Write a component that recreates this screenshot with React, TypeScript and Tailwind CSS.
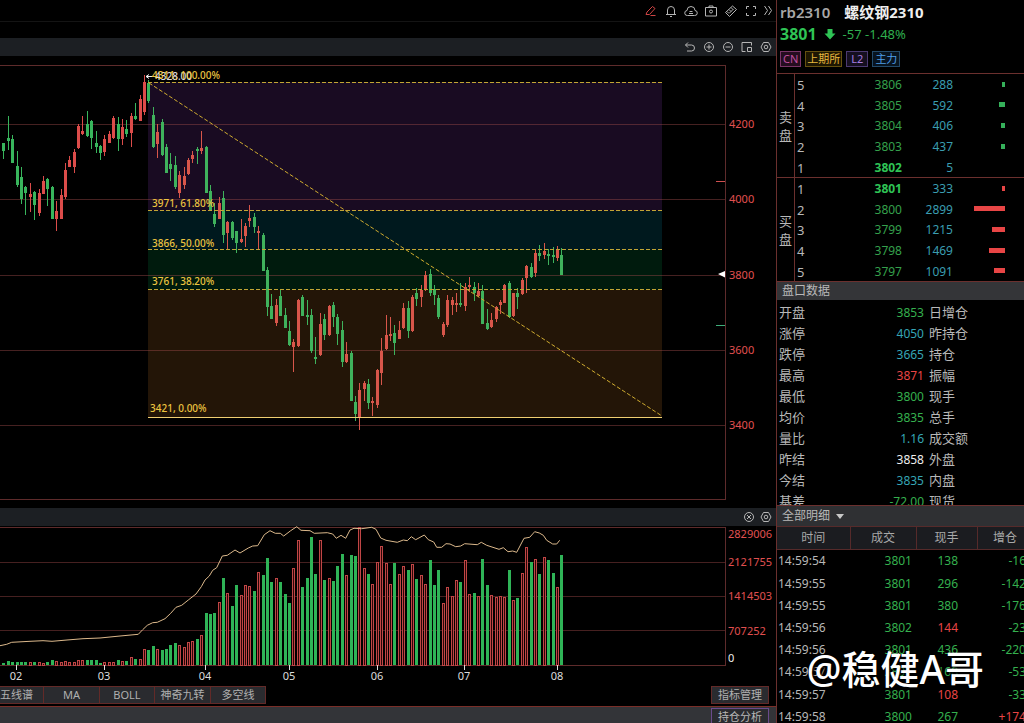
import type { ReactNode } from 'react';

type Dir = 'u' | 'd';
// direction, high, low, body top, body bottom
type Candle = [Dir, number, number, number, number];

const STEP = 4.394;
const START = 3.4;
const VOLUME_BASE = 665;

const candles: Candle[] = [
  ['d', 143, 159, 143, 151], ['d', 116, 150, 138, 141], ['d', 135, 163, 139, 163], ['d', 151, 187, 166, 185],
  ['d', 167, 204, 177, 199], ['d', 186, 215, 187, 193], ['u', 183, 212, 194, 197], ['d', 191, 220, 192, 205],
  ['u', 189, 216, 193, 213], ['u', 176, 194, 181, 194], ['d', 178, 206, 179, 189], ['d', 186, 219, 187, 219],
  ['u', 201, 231, 211, 219], ['u', 189, 219, 195, 219], ['u', 163, 199, 170, 197], ['u', 156, 167, 160, 167],
  ['u', 149, 173, 152, 167], ['u', 124, 149, 126, 148], ['u', 116, 135, 131, 134], ['d', 111, 137, 124, 136],
  ['d', 120, 149, 121, 138], ['d', 131, 153, 143, 147], ['d', 145, 160, 146, 153], ['u', 135, 156, 139, 152],
  ['u', 131, 143, 134, 143], ['u', 116, 139, 118, 138], ['d', 117, 151, 124, 139], ['u', 119, 145, 127, 139],
  ['d', 120, 137, 129, 134], ['u', 113, 147, 116, 133], ['d', 103, 120, 116, 119], ['u', 95, 121, 99, 121],
  ['u', 75, 115, 82, 112], ['d', 80, 103, 83, 101], ['d', 107, 148, 115, 147], ['u', 124, 158, 132, 144],
  ['d', 119, 156, 122, 155], ['d', 144, 173, 147, 173], ['d', 153, 181, 164, 169], ['d', 156, 189, 165, 187],
  ['u', 171, 198, 175, 193], ['u', 167, 189, 176, 185], ['u', 158, 175, 160, 174], ['u', 151, 163, 155, 159],
  ['d', 147, 164, 149, 151], ['u', 131, 154, 148, 151], ['d', 146, 193, 147, 193], ['d', 185, 211, 191, 210],
  ['d', 203, 227, 214, 224], ['u', 197, 219, 203, 219], ['d', 191, 243, 198, 235], ['u', 221, 249, 222, 233],
  ['d', 221, 240, 222, 238], ['d', 231, 253, 231, 243], ['u', 219, 243, 239, 242], ['u', 223, 247, 226, 236],
  ['u', 205, 227, 218, 221], ['d', 213, 233, 217, 227], ['u', 226, 249, 231, 233], ['d', 233, 271, 235, 271],
  ['d', 267, 316, 270, 307], ['d', 294, 319, 306, 319], ['u', 299, 326, 305, 323], ['d', 290, 316, 296, 316],
  ['d', 308, 328, 315, 328], ['d', 321, 346, 331, 345], ['u', 339, 372, 342, 347], ['u', 299, 347, 300, 346],
  ['d', 295, 316, 297, 316], ['d', 300, 325, 315, 317], ['d', 309, 353, 315, 351], ['d', 337, 364, 357, 358],
  ['u', 313, 356, 324, 355], ['d', 314, 340, 319, 335], ['u', 305, 336, 306, 335], ['d', 302, 327, 305, 317],
  ['d', 314, 345, 317, 334], ['d', 321, 367, 330, 362], ['u', 342, 363, 354, 362], ['d', 351, 401, 353, 401],
  ['d', 396, 421, 402, 414], ['u', 383, 430, 390, 417], ['u', 381, 401, 383, 389], ['d', 379, 409, 384, 403],
  ['u', 397, 416, 401, 403], ['u', 369, 408, 370, 405], ['u', 338, 385, 351, 373], ['u', 315, 350, 335, 349],
  ['u', 317, 341, 334, 335], ['d', 325, 355, 333, 343], ['u', 321, 339, 330, 339], ['u', 303, 329, 308, 328],
  ['d', 301, 338, 308, 331], ['u', 295, 332, 297, 331], ['d', 288, 306, 293, 299], ['u', 285, 307, 290, 297],
  ['u', 271, 291, 275, 290], ['d', 269, 296, 274, 293], ['d', 285, 305, 289, 295], ['d', 295, 319, 298, 317],
  ['u', 322, 337, 324, 335], ['u', 295, 327, 300, 325], ['u', 297, 315, 300, 305], ['u', 293, 312, 303, 305],
  ['d', 283, 307, 303, 305], ['u', 283, 311, 287, 306], ['u', 277, 292, 285, 287], ['d', 282, 301, 287, 293],
  ['u', 283, 297, 291, 296], ['d', 285, 324, 291, 324], ['d', 309, 330, 323, 329], ['u', 313, 328, 320, 327],
  ['u', 306, 322, 307, 319], ['u', 300, 314, 302, 305], ['u', 284, 303, 285, 303], ['d', 281, 318, 283, 317],
  ['u', 293, 317, 293, 316], ['d', 288, 309, 293, 297], ['u', 278, 295, 280, 294], ['u', 265, 293, 266, 278],
  ['d', 263, 278, 267, 277], ['u', 249, 277, 253, 273], ['d', 245, 261, 253, 256], ['u', 243, 259, 251, 255],
  ['d', 249, 265, 254, 256], ['d', 247, 263, 255, 257], ['u', 246, 261, 249, 258], ['d', 248, 275, 255, 275],
];

// bar heights, one for each candle
const volumes = [
  2, 4, 3, 3, 3, 3, 3, 3, 3, 2, 3, 5, 4, 3, 4, 3, 3, 5, 5, 5, 5, 5, 2, 3, 3, 3, 5, 4, 4, 8, 6, 6,
  16, 15, 19, 16, 15, 16, 20, 22, 20, 18, 23, 24, 26, 30, 52, 51, 52, 63, 87, 72, 59, 80, 70, 80, 79, 74, 93, 90, 107, 83, 87, 83,
  71, 62, 97, 125, 78, 87, 128, 91, 125, 85, 87, 84, 99, 111, 90, 110, 109, 138, 97, 91, 81, 103, 119, 102, 81, 102, 91, 99, 95, 101, 86, 90,
  81, 105, 80, 95, 62, 78, 69, 85, 83, 105, 71, 72, 69, 106, 80, 70, 68, 69, 68, 95, 65, 67, 92, 118, 103, 106, 91, 108, 105, 92, 78, 110,
];

const openInterest =
  '0,645.7 6.7,644.3 11.7,642.3 30,641.3 43,640.7 52,641.3 67,640 83,638.7 100,638 117,636.3 138.3,634.3 142.7,629.7 147.3,625.3 152.7,622.7 157.3,622.3 165,618.7 170.7,613.3 176,607.3 181.7,605.3 188.3,600 196,594 201.3,586.7 205,580 209.3,576 212.7,570.3 216.7,567.7 222.3,556 227.3,555.3 235,550 240,553 248.3,548 252.7,546 257.7,545.7 264.3,534.7 270,530.7 275.3,533.3 280.3,533.3 283.7,536 290.7,530.7 296.7,526.7 301,530.3 310,530.7 314.3,533.3 327.3,532.7 332.7,534 336.3,538.3 341,535.3 345.7,538.3 350,530 354,528.3 361.7,528.7 371.7,527.3 376,529.3 380.7,538 386,540.3 397.3,542.3 403.3,540 407.3,540.7 411.3,536.7 415.7,539.7 424.3,535 428.3,539.7 433.7,542 436.7,547.3 441.7,547.3 446,543.7 450,544 455.7,546.7 460.7,546 464.7,543.7 477.3,544.7 481.3,542.3 486.7,545.3 499,549.3 503.3,547.7 508,551.7 512.7,551 516.7,552.3 524,538.3 529.7,537.3 534.7,531.7 539.3,533 543.3,535.3 546.7,540.3 552.7,544 556.7,544 559.7,540.3';

const fibZones = [
  { y: 82, h: 129, fill: '#190b22' },
  { y: 211, h: 39, fill: '#00191e' },
  { y: 250, h: 40, fill: '#001b0d' },
  { y: 290, h: 127, fill: '#231507' },
];

const fibLabels = [
  { y: 79, text: '4311, 100.00%' },
  { y: 207, text: '3971, 61.80%' },
  { y: 247, text: '3866, 50.00%' },
  { y: 285, text: '3761, 38.20%' },
  { y: 412, text: '3421, 0.00%' },
];

const priceAxis = [
  { y: 124, label: '4200' },
  { y: 199, label: '4000' },
  { y: 275, label: '3800' },
  { y: 350, label: '3600' },
  { y: 425, label: '3400' },
];

const volumeAxis = [
  { y: 538, label: '2829006' },
  { y: 566, label: '2121755' },
  { y: 600, label: '1414503' },
  { y: 635, label: '707252' },
];

const months = [
  { x: 16, label: '02' },
  { x: 104, label: '03' },
  { x: 205, label: '04' },
  { x: 289, label: '05' },
  { x: 377, label: '06' },
  { x: 464, label: '07' },
  { x: 557, label: '08' },
];

const asks = [
  { level: 5, price: 3806, qty: 288, bar: 3 },
  { level: 4, price: 3805, qty: 592, bar: 6 },
  { level: 3, price: 3804, qty: 406, bar: 4 },
  { level: 2, price: 3803, qty: 437, bar: 4 },
  { level: 1, price: 3802, qty: 5, bar: 0 },
];

const bids = [
  { level: 1, price: 3801, qty: 333, bar: 3 },
  { level: 2, price: 3800, qty: 2899, bar: 31 },
  { level: 3, price: 3799, qty: 1215, bar: 13 },
  { level: 4, price: 3798, qty: 1469, bar: 16 },
  { level: 5, price: 3797, qty: 1091, bar: 11 },
];

const quoteRows = [
  { name: '开盘', value: '3853', color: 'text-[#35b04e]', other: '日增仓' },
  { name: '涨停', value: '4050', color: 'text-[#35a5b5]', other: '昨持仓' },
  { name: '跌停', value: '3665', color: 'text-[#35a5b5]', other: '持仓' },
  { name: '最高', value: '3871', color: 'text-[#e84545]', other: '振幅' },
  { name: '最低', value: '3800', color: 'text-[#35b04e]', other: '现手' },
  { name: '均价', value: '3835', color: 'text-[#35b04e]', other: '总手' },
  { name: '量比', value: '1.16', color: 'text-[#35a5b5]', other: '成交额' },
  { name: '昨结', value: '3858', color: 'text-[#eeeeee]', other: '外盘' },
  { name: '今结', value: '3835', color: 'text-[#35a5b5]', other: '内盘' },
  { name: '基差', value: '-72.00', color: 'text-[#35b04e]', other: '现货' },
];

const trades = [
  { time: '14:59:54', price: 3801, qty: 138, delta: '-16', up: false },
  { time: '14:59:55', price: 3801, qty: 296, delta: '-142', up: false },
  { time: '14:59:55', price: 3801, qty: 380, delta: '-176', up: false },
  { time: '14:59:56', price: 3802, qty: 144, delta: '-23', up: true },
  { time: '14:59:56', price: 3801, qty: 436, delta: '-220', up: false },
  { time: '14:59:57', price: 3801, qty: 168, delta: '-53', up: false },
  { time: '14:59:57', price: 3801, qty: 108, delta: '-33', up: true },
  { time: '14:59:58', price: 3800, qty: 267, delta: '+174', up: false },
];

function IconButton({ label, className = 'w-3.5 text-[#b5b5b5]', box = '0 0 14 14', children }: { label: string; className?: string; box?: string; children: ReactNode }) {
  return (
    <button type="button" aria-label={label} className={`h-3.5 ${className}`}>
      <svg viewBox={box} className="block h-full w-full" fill="none" stroke="currentColor" strokeWidth="1">
        {children}
      </svg>
    </button>
  );
}

function SettingsButton() {
  return (
    <IconButton label="设置">
      <path d="M4.500 2.500h5l2.500 4.500-2.500 4.500h-5L2 7z" />
      <circle cx="7" cy="7" r="1.800" />
    </IconButton>
  );
}

function PriceChart() {
  return (
    <svg viewBox="0 56 776 452" className="block h-auto w-full" role="img" aria-label="螺纹钢2310 K线">
      <g shapeRendering="crispEdges">
        {fibZones.map((z) => (
          <rect key={z.y} x="148" y={z.y} width="514" height={z.h} fill={z.fill} />
        ))}
        {priceAxis.map((a) => (
          <rect key={a.y} x="0" y={a.y} width="725" height="1" fill="#9b4a4a" fillOpacity="0.45" />
        ))}
        <path d="M0 65.500H725.500V499.500H0" fill="none" stroke="#5e2b2b" />
        {candles.map(([dir, high, low, top, bottom], i) => {
          const x = Math.round(START + i * STEP);
          const fill = dir === 'u' ? (i > 33 ? '#d8564a' : '#dc4c4a') : i > 33 ? '#3fb25c' : '#38b55c';
          return (
            <g key={i} fill={fill}>
              <rect x={x} y={high} width="1" height={low - high} />
              <rect x={x - 1} y={top} width="3" height={Math.max(bottom - top, 2)} />
            </g>
          );
        })}
        {[82, 210, 249, 289].map((y) => (
          <path key={y} d={`M148 ${y + 0.5}H662`} stroke="#c2a535" strokeDasharray="4 2" />
        ))}
        <rect x="148" y="417" width="514" height="1" fill="#f0cf72" />
        <rect x="716" y="181" width="9" height="1" fill="#d05050" />
        <rect x="716" y="325" width="9" height="1" fill="#3fae7a" />
      </g>
      <path d="M149 83L662 416" stroke="#d0ac30" strokeDasharray="4 2" />
      <path d="M718 274L725 271V277.500Z" fill="#ffffff" />
      <path d="M146 76.500H156M149 74.500L146 76.500L149 78.500" stroke="#eeeeee" fill="none" />
      <g fontSize="10" fontWeight="500">
        <text x="155" y="80" fill="#dddddd">4328.00</text>
        {fibLabels.map((l) => (
          <text key={l.y} x={l.y === 412 ? 150 : 152} y={l.y} fill="#ecc440">
            {l.text}
          </text>
        ))}
      </g>
      <g fontSize="11" fill="#e05050">
        {priceAxis.map((a) => (
          <text key={a.y} x="729" y={a.y + 4}>
            {a.label}
          </text>
        ))}
      </g>
    </svg>
  );
}

function VolumeChart() {
  return (
    <svg viewBox="0 526 776 160" className="block h-auto w-full" role="img" aria-label="成交量">
      <g shapeRendering="crispEdges">
        {[562, 596, 630].map((y) => (
          <rect key={y} x="0" y={y} width="725" height="1" fill="#462020" />
        ))}
        <path d="M0 527.500H725.500V665.500H0" fill="none" stroke="#5e2b2b" />
        {volumes.map((h, i) => {
          const x = Math.round(START + i * STEP) - 1;
          return candles[i][0] === 'd' ? (
            <rect key={i} x={x} y={VOLUME_BASE - h} width="3" height={h} fill="#2fb457" />
          ) : (
            <rect key={i} x={x + 0.5} y={VOLUME_BASE - h + 0.5} width="2" height={h - 0.5} fill="#2c0606" stroke="#c04646" />
          );
        })}
        {months.map((m) => (
          <rect key={m.label} x={m.x} y="665" width="1" height="5" fill="#dddddd" />
        ))}
      </g>
      <polyline points={openInterest} fill="none" stroke="#dcb98c" />
      <g fontSize="11">
        {volumeAxis.map((a) => (
          <text key={a.y} x="728" y={a.y} fill="#e05050">
            {a.label}
          </text>
        ))}
        <text x="728" y="662" fill="#eeeeee">0</text>
        {months.map((m) => (
          <text key={m.label} x={m.x} y="680" textAnchor="middle" fill="#dddddd">
            {m.label}
          </text>
        ))}
      </g>
    </svg>
  );
}

function OrderBook({ side, rows, best, barColor }: { side: [string, string]; rows: typeof asks; best: number; barColor: string }) {
  return (
    <div className="flex border-t border-[#6b302e]">
      <div className="flex w-[18px] flex-col items-center justify-center gap-1 border-r border-[#6b302e] text-[13px] leading-[14px] text-[#b8b8b8]">
        <span>{side[0]}</span>
        <span>{side[1]}</span>
      </div>
      <table className="h-[103px] flex-1 table-fixed text-xs leading-4">
        <tbody>
          {rows.map((r) => (
            <tr key={r.level}>
              <td className="w-7 pt-0.5 pl-0.5 text-[13px] text-[#b8b8b8]">{r.level}</td>
              <td className={`w-[79px] pt-0.5 text-right ${r.price === best ? 'font-bold text-[#2fc455]' : 'text-[#35a04c]'}`}>{r.price}</td>
              <td className="w-[51px] pt-0.5 text-right text-[#3a9db0]">{r.qty}</td>
              <td className="pr-[19px]">
                <div className={`ml-auto h-[5px] ${barColor}`} style={{ width: r.bar }} />
              </td>
            </tr>
          ))}
        </tbody>
      </table>
    </div>
  );
}

function QuotePanel() {
  return (
    <aside className="flex w-[248px] shrink-0 flex-col overflow-hidden border-l border-[#6b302e]">
      <header className="h-[73px] shrink-0 px-[3px]">
        <h1 className="flex gap-3.5 text-[15px] leading-6 font-bold">
          <span className="font-semibold text-[#a8a8a8]">rb2310</span>
          <span className="text-[#eeeeee]">螺纹钢2310</span>
        </h1>
        <div className="flex items-center text-[#2fb04e]">
          <span className="text-base leading-5 font-bold text-[#2fc455]">3801</span>
          <svg viewBox="0 0 12 12" className="mx-[7px] h-3 w-3" fill="#2fc455">
            <path d="M3.500 1H8.500V5.500H11.500L6 11.500L0.500 5.500H3.500Z" />
          </svg>
          <span className="text-[13px] leading-5">-57 -1.48%</span>
        </div>
        <div className="mt-[7px] flex gap-1 text-[11px] leading-[14px]">
          <span className="border border-[#7a3568] bg-[#260d20] px-0.5 text-[#c250a0]">CN</span>
          <span className="border border-[#66510f] bg-[#1e1702] px-px text-[#e8b93f]">上期所</span>
          <span className="border border-[#4c3a73] bg-[#150f20] px-1 text-[#a57ee0]">L2</span>
          <span className="border border-[#234a6a] bg-[#081420] px-0.5 text-[#4f9fe8]">主力</span>
        </div>
      </header>

      <OrderBook side={['卖', '盘']} rows={asks} best={3802} barColor="bg-[#35b05a]" />
      <OrderBook side={['买', '盘']} rows={bids} best={3801} barColor="bg-[#e84545]" />

      <h2 className="border-t border-[#6b302e] bg-[#343538] pl-[5px] text-xs leading-[18px] text-[#b8b8b8]">盘口数据</h2>
      <div className="h-[205px] shrink-0 overflow-hidden pt-0.5">
        <table className="w-full table-fixed text-xs leading-[21px]">
          <tbody>
            {quoteRows.map((r) => (
              <tr key={r.name} className="h-[21px]">
                <th className="w-[60px] pl-0.5 text-left text-[13px] font-normal text-[#b8b8b8]">{r.name}</th>
                <td className={`w-[87px] text-right ${r.color}`}>{r.value}</td>
                <th className="pl-[5px] text-left text-[13px] font-normal text-[#b8b8b8]">{r.other}</th>
              </tr>
            ))}
          </tbody>
        </table>
      </div>

      <button type="button" className="flex shrink-0 items-center gap-1.5 border-t border-[#6b302e] bg-[#2f3033] pl-[5px] text-xs leading-5 text-[#b8b8b8]">
        全部明细
        <svg viewBox="0 0 8 5" className="h-[5px] w-2" fill="#c8c8c8">
          <path d="M0 0H8L4 5Z" />
        </svg>
      </button>
      <table className="h-[202px] w-64 shrink-0 table-fixed border-collapse text-xs leading-4">
        <thead>
          <tr className="h-[23px] bg-[#1b1c20] text-[#a8a8a8]">
            <th className="w-[73px] border-y border-r border-[#562a2a] font-normal">时间</th>
            <th className="w-[66px] border border-[#562a2a] font-normal">成交</th>
            <th className="w-[61px] border border-[#562a2a] font-normal">现手</th>
            <th className="w-14 border border-[#562a2a] font-normal">增仓</th>
          </tr>
        </thead>
        <tbody className="text-[#35b04e]">
          {trades.map((t, i) => (
            <tr key={i}>
              <td className="pl-px text-[#b8b8b8]">{t.time}</td>
              <td className="pr-1 text-right">{t.price}</td>
              <td className={`pr-[19px] text-right ${t.up ? 'text-[#e84545]' : ''}`}>{t.qty}</td>
              <td className={`pr-[7px] text-right ${t.delta.startsWith('+') ? 'text-[#e84545]' : ''}`}>{t.delta}</td>
            </tr>
          ))}
        </tbody>
      </table>
    </aside>
  );
}

export default function App() {
  return (
    <div className="relative flex h-screen overflow-hidden bg-black font-['Noto_Sans','Noto_Sans_CJK_SC',sans-serif]">
      <main className="flex min-w-0 flex-1 flex-col">
        <div className="flex h-[22px] shrink-0 items-center justify-end gap-1.5 border-b border-[#141414] pr-1">
          <IconButton label="画线" className="w-3.5 text-[#d04545]">
            <path d="M2 10.500L3 8L8.500 2.500L11 4.500L5.500 10.500ZM6.500 11.500H11.500" />
          </IconButton>
          <IconButton label="预警">
            <path d="M3.500 10.500V6a3.500 3.500 0 0 1 7 0V10.500M2 10.500H12M6 12.500H8" />
          </IconButton>
          <IconButton label="云端">
            <path d="M3.500 11.500a2.500 2.500 0 0 1-.5-5a4 4 0 0 1 8 0a2.500 2.500 0 0 1-.5 5ZM5.500 7.500H8.500M5 9.500H9" />
          </IconButton>
          <IconButton label="截图">
            <path d="M1.500 3.500H12.500V12H1.500ZM5 3.500V2H9V3.500" />
            <circle cx="7" cy="7.500" r="1.500" />
          </IconButton>
          <IconButton label="测量">
            <path d="M1.500 8.500L8.500 2L12.500 5.500L5.500 12.500ZM5 5.500L7 7.500M7 3.500L9 5.500M3 7.500L4.500 9M5 9.500L9.500 5" />
          </IconButton>
          <IconButton label="全屏">
            <path d="M2.500 5V2.500H5M9 2.500H11.500V5M11.500 9V11.500H9M5 11.500H2.500V9" />
          </IconButton>
          <IconButton label="更多" className="w-2 text-[#b5b5b5]" box="0 0 8 14">
            <path d="M0.500 2L3.500 6.500L0.500 11M4.500 2L7.500 6.500L4.500 11" />
          </IconButton>
        </div>
        <div className="mt-4 flex h-[18px] shrink-0 items-center justify-end gap-[5px] bg-[#1c1f23] pr-[3px]">
          <IconButton label="撤销">
            <path d="M5 2.500L2.500 5L5 7.500M2.500 5H8.500a3 3 0 0 1 0 6H4" />
          </IconButton>
          <IconButton label="放大">
            <circle cx="7" cy="7" r="4.500" />
            <path d="M4.500 7H9.500M7 4.500V9.500" />
          </IconButton>
          <IconButton label="缩小">
            <circle cx="7" cy="7" r="4.500" />
            <path d="M4.500 7H9.500" />
          </IconButton>
          <IconButton label="窗口">
            <path d="M11.500 5.500V2.500H2V11.500H5.500M7.500 7.500H11.500V11.500H7.500Z" />
          </IconButton>
          <SettingsButton />
        </div>
        <PriceChart />
        <div className="flex h-[18px] shrink-0 items-center justify-end gap-[3px] bg-[#1c1f23] pr-[3px]">
          <IconButton label="关闭">
            <circle cx="7" cy="7" r="4.500" />
            <path d="M5 5L9 9M9 5L5 9" />
          </IconButton>
          <SettingsButton />
        </div>
        <VolumeChart />

        <div className="mb-0.5 flex h-[18px] shrink-0 justify-between pr-[7px] text-[11px] leading-4 text-[#b0b0b0]">
          <nav className="flex">
            <button type="button" className="w-11 border border-l-0 border-[#632a28] bg-[#2a2b2f] pr-3 whitespace-nowrap">五线谱</button>
            <button type="button" className="w-14 border border-l-0 border-[#632a28] bg-[#2a2b2f]">MA</button>
            <button type="button" className="w-[55px] border border-l-0 border-[#632a28] bg-[#2a2b2f]">BOLL</button>
            <button type="button" className="w-14 border border-l-0 border-[#632a28] bg-[#2a2b2f]">神奇九转</button>
            <button type="button" className="w-[55px] border border-l-0 border-[#632a28] bg-[#2a2b2f]">多空线</button>
          </nav>
          <button type="button" className="w-[58px] border border-[#632a28] bg-[#2a2b2f]">指标管理</button>
        </div>
        <div className="flex min-h-[17px] flex-1 justify-end border-t border-[#7a2e28] bg-[#333438] pt-px pr-[7px] text-[11px] leading-4 text-[#b8b8b8]">
          <button type="button" className="h-[18px] w-[58px] border border-[#6a4a8c] bg-[#2a2b2f]">持仓分析</button>
        </div>
      </main>

      <QuotePanel />

      <div className="pointer-events-none absolute right-10 bottom-[26px] text-[39px] leading-[56px] font-medium text-white [text-shadow:2px_2px_2px_#000]">
        @稳健A哥
      </div>
    </div>
  );
}
